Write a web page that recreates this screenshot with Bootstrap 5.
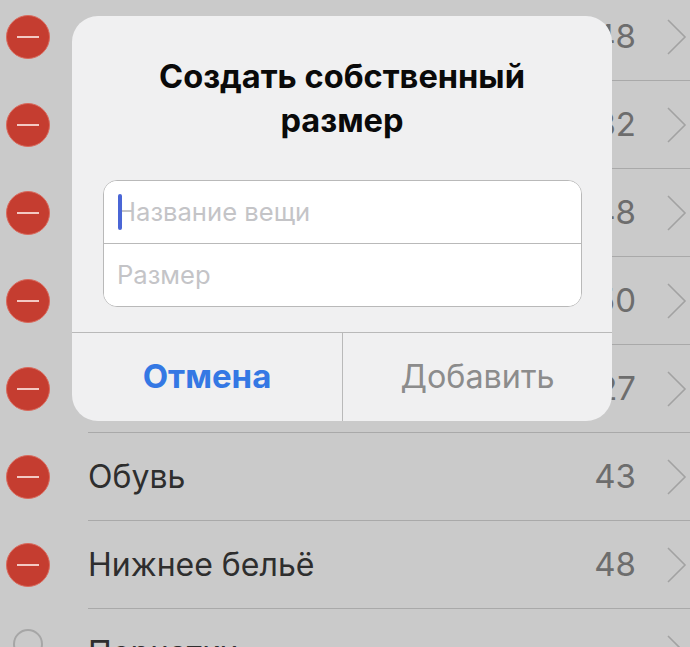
<!DOCTYPE html>
<html lang="ru">
<head>
<meta charset="utf-8">
<title>Создать собственный размер</title>
<link rel="stylesheet" href="https://cdn.jsdelivr.net/npm/bootstrap@5.3.0/dist/css/bootstrap.min.css">
<style>
html, body { height: 647px; overflow: hidden; }
body { background: #cacaca; font-family: Inter, "Liberation Sans", sans-serif; position: relative; }
.size-list { margin-top: -7px; }
.size-row { height: 88px; padding-left: 6px; }
.del-dot { width: 44px; height: 44px; border-radius: 50%; background: #c53d30; border: 1px solid #d9695c; flex: none; }
.del-bar { width: 22px; height: 2px; background: #f3c9c3; }
.off-dot { width: 30px; height: 30px; border-radius: 50%; border: 2px solid #a6a6a6; flex: none; margin: -18px 7px 0; }
.row-body { height: 88px; margin-left: 38px; border-bottom: 1.5px solid #a9a9a9; padding-right: 3px; }
.row-name { font-size: 32px; color: #2e2e2e; }
.row-num { font-size: 33px; color: #6d6d6d; margin-right: 31px; }
.row-chev { width: 20px; height: 36px; flex: none; }
.size-dialog { position: absolute; left: 72px; top: 16px; width: 540px; height: 405px; background: #f0f0f1; border-radius: 26px; overflow: hidden; }
.dlg-title { font-size: 32.6px; font-weight: 700; line-height: 44px; color: #0a0a0a; padding: 38px 60px 0; height: 164px; margin: 0; }
.dlg-fields { margin: 0 30px 0 31px; height: 127px; border: 1.5px solid #b9b9b9; border-radius: 14px; background: #fff; position: relative; overflow: hidden; }
.dlg-field { height: 62px; border: 0; border-radius: 0; padding: 0 13px 2px; font-size: 25.6px; background: #fff; }
.dlg-field::placeholder { color: #c4c4c7; opacity: 1; }
.dlg-field + .dlg-field { height: 63px; border-top: 1.5px solid #b9b9b9; }
.dlg-caret { position: absolute; left: 14px; top: 13px; width: 4px; height: 36px; border-radius: 2px; background: #4a66d6; }
.dlg-actions { margin-top: 25px; height: 89px; border-top: 1.5px solid #b9b9b9; }
.dlg-btn { font-size: 32.3px; height: 88px; border: 0; border-radius: 0; padding: 0; background: transparent; }
.dlg-cancel { width: 270px; font-size: 33px; font-weight: 700; color: #3478e4; }
.dlg-add { width: 270px; color: #8c8c8c; border-left: 1.5px solid #b9b9b9; }
</style>
</head>
<body>
<div class="size-list">
  <div class="size-row d-flex align-items-center"><span class="del-dot d-flex align-items-center justify-content-center"><span class="del-bar"></span></span><div class="row-body flex-grow-1 d-flex align-items-center justify-content-between"><span class="row-name"></span><span class="d-flex align-items-center"><span class="row-num">48</span><svg class="row-chev" viewBox="0 0 20 36" fill="none" stroke="#a2a2a2" stroke-width="1.6"><path d="M1 1l17 17L1 35"/></svg></span></div></div>
  <div class="size-row d-flex align-items-center"><span class="del-dot d-flex align-items-center justify-content-center"><span class="del-bar"></span></span><div class="row-body flex-grow-1 d-flex align-items-center justify-content-between"><span class="row-name"></span><span class="d-flex align-items-center"><span class="row-num">32</span><svg class="row-chev" viewBox="0 0 20 36" fill="none" stroke="#a2a2a2" stroke-width="1.6"><path d="M1 1l17 17L1 35"/></svg></span></div></div>
  <div class="size-row d-flex align-items-center"><span class="del-dot d-flex align-items-center justify-content-center"><span class="del-bar"></span></span><div class="row-body flex-grow-1 d-flex align-items-center justify-content-between"><span class="row-name"></span><span class="d-flex align-items-center"><span class="row-num">48</span><svg class="row-chev" viewBox="0 0 20 36" fill="none" stroke="#a2a2a2" stroke-width="1.6"><path d="M1 1l17 17L1 35"/></svg></span></div></div>
  <div class="size-row d-flex align-items-center"><span class="del-dot d-flex align-items-center justify-content-center"><span class="del-bar"></span></span><div class="row-body flex-grow-1 d-flex align-items-center justify-content-between"><span class="row-name"></span><span class="d-flex align-items-center"><span class="row-num">50</span><svg class="row-chev" viewBox="0 0 20 36" fill="none" stroke="#a2a2a2" stroke-width="1.6"><path d="M1 1l17 17L1 35"/></svg></span></div></div>
  <div class="size-row d-flex align-items-center"><span class="del-dot d-flex align-items-center justify-content-center"><span class="del-bar"></span></span><div class="row-body flex-grow-1 d-flex align-items-center justify-content-between"><span class="row-name"></span><span class="d-flex align-items-center"><span class="row-num">27</span><svg class="row-chev" viewBox="0 0 20 36" fill="none" stroke="#a2a2a2" stroke-width="1.6"><path d="M1 1l17 17L1 35"/></svg></span></div></div>
  <div class="size-row d-flex align-items-center"><span class="del-dot d-flex align-items-center justify-content-center"><span class="del-bar"></span></span><div class="row-body flex-grow-1 d-flex align-items-center justify-content-between"><span class="row-name">Обувь</span><span class="d-flex align-items-center"><span class="row-num">43</span><svg class="row-chev" viewBox="0 0 20 36" fill="none" stroke="#a2a2a2" stroke-width="1.6"><path d="M1 1l17 17L1 35"/></svg></span></div></div>
  <div class="size-row d-flex align-items-center"><span class="del-dot d-flex align-items-center justify-content-center"><span class="del-bar"></span></span><div class="row-body flex-grow-1 d-flex align-items-center justify-content-between"><span class="row-name">Нижнее бельё</span><span class="d-flex align-items-center"><span class="row-num">48</span><svg class="row-chev" viewBox="0 0 20 36" fill="none" stroke="#a2a2a2" stroke-width="1.6"><path d="M1 1l17 17L1 35"/></svg></span></div></div>
  <div class="size-row d-flex align-items-center"><span class="off-dot"></span><div class="row-body flex-grow-1 d-flex align-items-center justify-content-between"><span class="row-name">Перчатки</span><span class="d-flex align-items-center"><svg class="row-chev" viewBox="0 0 20 36" fill="none" stroke="#a2a2a2" stroke-width="1.6"><path d="M1 1l17 17L1 35"/></svg></span></div></div>
</div>
<div class="size-dialog">
  <h5 class="dlg-title text-center">Создать собственный размер</h5>
  <div class="dlg-fields">
    <input class="form-control dlg-field" type="text" placeholder="Название вещи" aria-label="Название вещи">
    <input class="form-control dlg-field" type="text" placeholder="Размер" aria-label="Размер">
    <span class="dlg-caret"></span>
  </div>
  <div class="dlg-actions d-flex">
    <button class="btn dlg-btn dlg-cancel" type="button">Отмена</button>
    <button class="btn dlg-btn dlg-add" type="button">Добавить</button>
  </div>
</div>
<script src="https://cdn.jsdelivr.net/npm/bootstrap@5.3.0/dist/js/bootstrap.bundle.min.js"></script>
</body>
</html>
